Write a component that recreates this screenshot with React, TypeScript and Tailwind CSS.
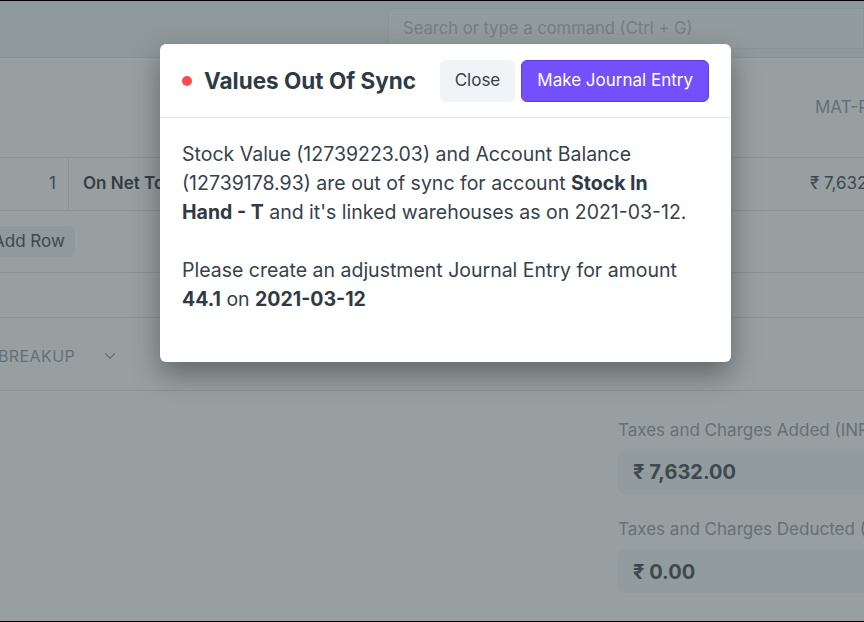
import { ChevronDown } from "lucide-react";

export default function App() {
  return (
    <div className="relative h-[622px] w-[864px] overflow-hidden border-y border-black bg-white font-['Inter',sans-serif] text-[#36414c]">
      {/* background page */}
      <div className="flex h-[57px] items-start justify-end border-b border-[#dfe3e6] bg-[#eef0f2] pt-[7px]">
        <div className="flex h-[41px] w-[476px] items-center rounded-l-md border border-[#e2e6e9] bg-[#f4f5f6] px-[14px] text-[16.6px] text-[#b2b9bf]">
          Search or type a command (Ctrl + G)
        </div>
      </div>

      <div className="flex h-[99px] items-center justify-end text-[17px] text-[#8d99a6]">
        <span className="w-[49px] overflow-hidden whitespace-nowrap">MAT-PRE-2021</span>
      </div>

      <div className="flex h-[54px] items-center border-y border-[#dfe3e6] text-[17px]">
        <div className="flex h-full w-[69px] items-center justify-end border-r border-[#dfe3e6] pr-[12px]">1</div>
        <div className="flex-1 pl-[14px] font-semibold text-[#1f272e]">On Net Total</div>
        <div className="w-[54px] overflow-hidden whitespace-nowrap">₹ 7,632.00</div>
      </div>

      <div className="flex h-[62px] items-center border-b border-[#dfe3e6]">
        <div className="-ml-[17px] flex h-[31px] items-center rounded-md bg-[#f0f2f4] px-[10px] text-[17px] text-[#36414c]">
          Add Row
        </div>
      </div>

      <div className="h-[45px] border-b border-[#dfe3e6]" />

      <div className="flex h-[73px] items-center gap-[26px] border-b border-[#dfe3e6] pt-[4px] text-[16px] tracking-wide text-[#8d99a6]">
        <span className="-ml-[2px]">BREAKUP</span>
        <ChevronDown className="h-[18px] w-[18px]" strokeWidth={1.5} />
      </div>

      <div className="ml-[618px] flex flex-col pt-[27px] text-[#8d99a6]">
        <div className="whitespace-nowrap text-[17px]">Taxes and Charges Added (INR)</div>
        <div className="mt-[7px] flex h-[43px] items-center rounded-l-md bg-[#f4f5f6] px-[15px] text-[20px] font-bold text-[#36414c]">
          ₹ 7,632.00
        </div>
        <div className="mt-[23px] whitespace-nowrap text-[17px]">Taxes and Charges Deducted (INR)</div>
        <div className="mt-[8px] flex h-[43px] items-center rounded-l-md bg-[#f4f5f6] px-[15px] text-[20px] font-bold text-[#36414c]">
          ₹ 0.00
        </div>
      </div>

      {/* overlay */}
      <div className="absolute inset-0 bg-[#415053]/55" />

      {/* modal */}
      <div className="absolute left-[160px] top-[43px] w-[571px] rounded-md bg-white shadow-[0_12px_28px_rgba(0,0,0,0.35)]">
        <div className="flex h-[74px] items-center justify-between border-b border-[#e5e8eb] px-[22px]">
          <div className="flex items-center gap-[12px]">
            <span className="h-[10px] w-[10px] rounded-full bg-[#fd4a4f]" />
            <h2 className="text-[22.5px] font-bold text-[#2f3a45]">Values Out Of Sync</h2>
          </div>
          <div className="flex items-center gap-[6px]">
            <button className="h-[42px] rounded-md bg-[#f0f4f7] px-[15px] text-[17px] text-[#36414c]">Close</button>
            <button className="h-[42px] rounded-md border border-[#5b3ee0] bg-[#7350fb] px-[15px] text-[17px] text-white">
              Make Journal Entry
            </button>
          </div>
        </div>
        <div className="whitespace-nowrap px-[22px] pb-[48px] pt-[22px] text-[19.5px] leading-[29px] text-[#36414c]">
          <p>
            Stock Value (12739223.03) and Account Balance
            <br />
            (12739178.93) are out of sync for account <b className="font-bold text-[#2f3a45]">Stock In</b>
            <br />
            <b className="font-bold text-[#2f3a45]">Hand - T</b> and it's linked warehouses as on 2021-03-12.
          </p>
          <br />
          <p>
            Please create an adjustment Journal Entry for amount
            <br />
            <b className="font-bold text-[#2f3a45]">44.1</b> on <b className="font-bold text-[#2f3a45]">2021-03-12</b>
          </p>
        </div>
      </div>
    </div>
  );
}
